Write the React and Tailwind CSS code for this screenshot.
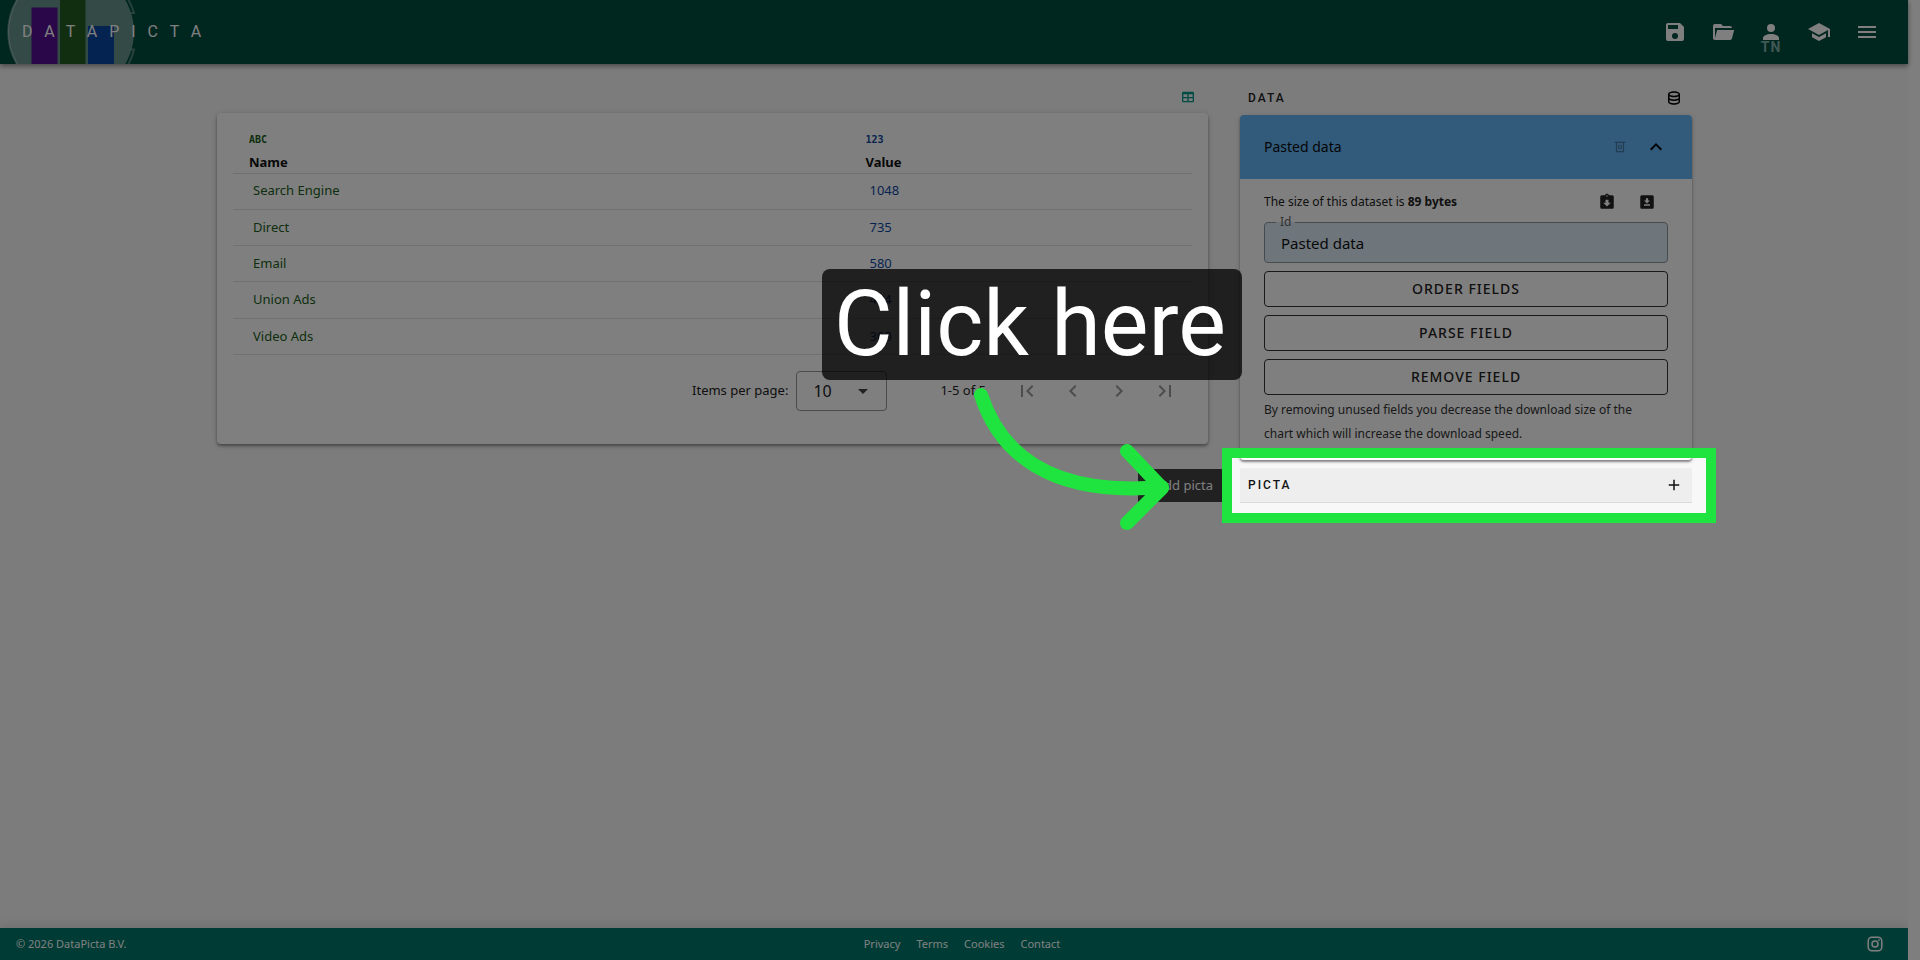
import { useState } from "react";

const icons = {
  save: "M15,9H5V5H15M12,19A3,3 0 0,1 9,16A3,3 0 0,1 12,13A3,3 0 0,1 15,16A3,3 0 0,1 12,19M17,3H5C3.89,3 3,3.9 3,5V19A2,2 0 0,0 5,21H19A2,2 0 0,0 21,19V7L17,3Z",
  folder:
    "M19,20H4C2.89,20 2,19.1 2,18V6C2,4.89 2.89,4 4,4H10L12,6H19A2,2 0 0,1 21,8H21L4,8V18L6.14,10H23.21L20.93,18.5C20.7,19.37 19.92,20 19,20Z",
  account:
    "M12,4A4,4 0 0,1 16,8A4,4 0 0,1 12,12A4,4 0 0,1 8,8A4,4 0 0,1 12,4M12,14C16.42,14 20,15.79 20,18V20H4V18C4,15.79 7.58,14 12,14Z",
  school: "M12,3L1,9L12,15L21,10.09V17H23V9M5,13.18V17.18L12,21L19,17.18V13.18L12,17L5,13.18Z",
  menu: "M3,6H21V8H3V6M3,11H21V13H3V11M3,16H21V18H3V16Z",
  table:
    "M5,4H19A2,2 0 0,1 21,6V18A2,2 0 0,1 19,20H5A2,2 0 0,1 3,18V6A2,2 0 0,1 5,4M5,8V12H11V8H5M13,8V12H19V8H13M5,14V18H11V14H5M13,14V18H19V14H13Z",
  database:
    "M12 3C7.58 3 4 4.79 4 7V17C4 19.21 7.59 21 12 21S20 19.21 20 17V7C20 4.79 16.42 3 12 3M18 17C18 17.5 15.87 19 12 19S6 17.5 6 17V14.77C7.61 15.55 9.72 16 12 16S16.39 15.55 18 14.77V17M18 12.45C16.7 13.4 14.42 14 12 14C9.58 14 7.3 13.4 6 12.45V9.64C7.47 10.47 9.61 11 12 11C14.39 11 16.53 10.47 18 9.64V12.45M12 9C8.13 9 6 7.5 6 7S8.13 5 12 5C15.87 5 18 6.5 18 7S15.87 9 12 9Z",
  trash: "M3,3H21V5H19V21H5V5H3V3M7,5V19H17V5H7M9,8H11V16H9V8M13,8H15V16H13V8Z",
  chevronUp: "M7.41,15.41L12,10.83L16.59,15.41L18,14L12,8L6,14L7.41,15.41Z",
  clipboard:
    "M12,18L7,13H10V9H14V13H17M12,3A1,1 0 0,1 13,4A1,1 0 0,1 12,5A1,1 0 0,1 11,4A1,1 0 0,1 12,3M19,3H14.82C14.4,1.84 13.3,1 12,1C10.7,1 9.6,1.84 9.18,3H5A2,2 0 0,0 3,5V19A2,2 0 0,0 5,21H19A2,2 0 0,0 21,19V5A2,2 0 0,0 19,3Z",
  download:
    "M5,3H19A2,2 0 0,1 21,5V19A2,2 0 0,1 19,21H5A2,2 0 0,1 3,19V5A2,2 0 0,1 5,3M8,17H16V15H8V17M16,10H13.5V7H10.5V10H8L12,14L16,10Z",
  plus: "M19,13H13V19H11V13H5V11H11V5H13V11H19V13Z",
  pageFirst: "M18.41,16.59L13.82,12L18.41,7.41L17,6L11,12L17,18L18.41,16.59M6,6H8V18H6V6Z",
  pagePrev: "M15.41,16.58L10.83,12L15.41,7.41L14,6L8,12L14,18L15.41,16.58Z",
  pageNext: "M8.59,16.58L13.17,12L8.59,7.41L10,6L16,12L10,18L8.59,16.58Z",
  pageLast: "M5.59,7.41L10.18,12L5.59,16.59L7,18L13,12L7,6L5.59,7.41M16,6H18V18H16V6Z",
  caret: "M7,10L12,15L17,10H7Z",
  instagram:
    "M7.8,2H16.2C19.4,2 22,4.6 22,7.8V16.2A5.8,5.8 0 0,1 16.2,22H7.8C4.6,22 2,19.4 2,16.2V7.8A5.8,5.8 0 0,1 7.8,2M7.6,4A3.6,3.6 0 0,0 4,7.6V16.4C4,18.39 5.61,20 7.6,20H16.4A3.6,3.6 0 0,0 20,16.4V7.6C20,5.61 18.39,4 16.4,4H7.6M17.25,5.5A1.25,1.25 0 0,1 18.5,6.75A1.25,1.25 0 0,1 17.25,8A1.25,1.25 0 0,1 16,6.75A1.25,1.25 0 0,1 17.25,5.5M12,7A5,5 0 0,1 17,12A5,5 0 0,1 12,17A5,5 0 0,1 7,12A5,5 0 0,1 12,7M12,9A3,3 0 0,0 9,12A3,3 0 0,0 12,15A3,3 0 0,0 15,12A3,3 0 0,0 12,9Z",
};

const rows = [
  { name: "Search Engine", value: 1048 },
  { name: "Direct", value: 735 },
  { name: "Email", value: 580 },
  { name: "Union Ads", value: 484 },
  { name: "Video Ads", value: 300 },
];

const Icon = ({ name, className = "w-6 h-6" }) => (
  <svg className={className} viewBox="0 0 24 24" fill="currentColor" aria-hidden="true">
    <path d={icons[name]} />
  </svg>
);

const IconButton = ({ name, label, className = "w-12 h-12", iconClass }) => (
  <button aria-label={label} className={`${className} shrink-0 flex items-center justify-center`}>
    <Icon name={name} className={iconClass} />
  </button>
);

function Header() {
  return (
    <header className="relative z-10 h-16 bg-[#004d40] text-white flex items-center justify-between pr-[17px] shadow-[0_2px_5px_rgba(0,0,0,0.45)]">
      <div className="relative h-16 flex items-center">
        <svg className="absolute left-0 top-0" width="140" height="64" viewBox="0 0 140 64" aria-hidden="true">
          <circle cx="71" cy="32" r="63" fill="#ffffff" fillOpacity="0.4" />
          <rect x="31.5" y="7.5" width="26" height="57" fill="#520f92" />
          <rect x="60" y="0" width="25.5" height="64" fill="#225c22" />
          <rect x="88" y="26" width="26" height="38" fill="#0a47a0" />
          <path d="M17.5 65A63 63 0 0 1 17.5 -1M128 -1Q132 6 134 13H131M131 49.5H134Q132 58 128 65" fill="none" stroke="#ffffff" strokeOpacity="0.3" strokeWidth="2" />
        </svg>
        <a href="#home" className="relative pl-[22px] font-['Roboto',sans-serif] text-base tracking-[12px]">
          DATAPICTA
        </a>
      </div>
      <nav className="flex items-center">
        <IconButton name="save" label="Save" />
        <IconButton name="folder" label="Open" />
        <div className="relative">
          <IconButton name="account" label="Account" />
          <span className="absolute inset-x-0 top-[31px] text-center font-['Roboto',sans-serif] text-sm leading-4 font-bold tracking-[1px] text-[#80b0a8]">
            TN
          </span>
        </div>
        <IconButton name="school" label="Tutorials" />
        <IconButton name="menu" label="Menu" />
      </nav>
    </header>
  );
}

function DataTable() {
  return (
    <section className="flex-1 min-w-0">
      <div className="h-[49px] pt-4 flex items-center justify-end pr-3 text-[#009688]">
        <IconButton name="table" label="Show table" className="w-4 h-8" iconClass="w-4 h-4" />
      </div>
      <div className="bg-white rounded px-4 pb-[33px] shadow-[0_2px_3px_rgba(0,0,0,0.35),0_1px_6px_rgba(0,0,0,0.15)]">
        <table className="w-full h-[242px] border-collapse table-fixed text-left text-[13px]">
          <thead>
            <tr className="h-[60px] border-b border-[#dedede]">
              <th className="w-9/14 px-4 pb-px align-bottom text-[#111]">
                <span className="block font-['DejaVu_Sans_Mono',monospace] text-[10px] leading-4 mb-1 text-[#1b5e20]">ABC</span>
                <span className="block leading-5">Name</span>
              </th>
              <th className="px-4 pb-px align-bottom text-[#111]">
                <span className="block font-['DejaVu_Sans_Mono',monospace] text-[10px] leading-4 mb-1 text-[#0d47a1]">123</span>
                <span className="block leading-5">Value</span>
              </th>
            </tr>
          </thead>
          <tbody>
            {rows.map((row) => (
              <tr key={row.name} className="border-b border-[#e2e2e2]">
                <td className="px-5 text-[#1b5e20]">{row.name}</td>
                <td className="px-5 text-[#0d47a1]">{row.value}</td>
              </tr>
            ))}
          </tbody>
        </table>
        <div className="mt-4 h-10 flex items-center justify-end text-[13px] text-[#222]">
          <label htmlFor="per-page" className="mr-2">Items per page:</label>
          <div className="relative">
            <select
              id="per-page"
              defaultValue="10"
              className="appearance-none block w-[91px] h-10 pl-4 rounded border border-[#999] bg-transparent text-base"
            >
              <option>10</option>
              <option>25</option>
              <option>50</option>
            </select>
            <Icon name="caret" className="absolute right-3 top-2 w-6 h-6 pointer-events-none text-[#444]" />
          </div>
          <span className="ml-[53px] mr-[18px]">1-5 of 5</span>
          <div className="flex text-[#999] pr-1">
            <IconButton name="pageFirst" label="First page" className="w-[46px] h-10" />
            <IconButton name="pagePrev" label="Previous page" className="w-[46px] h-10" />
            <IconButton name="pageNext" label="Next page" className="w-[46px] h-10" />
            <IconButton name="pageLast" label="Last page" className="w-[46px] h-10" />
          </div>
        </div>
      </div>
    </section>
  );
}

function DataPanel() {
  const [id, setId] = useState("Pasted data");

  return (
    <>
      <div className="h-[51px] pt-4 flex items-center justify-between pl-2 pr-[9px]">
        <h2 className="font-['Roboto',sans-serif] text-xs font-medium tracking-[2px] text-[#222]">DATA</h2>
        <IconButton name="database" label="Data sources" className="w-[18px] h-8" iconClass="w-[18px] h-[18px]" />
      </div>
      <div className="bg-white rounded shadow-[0_2px_2px_rgba(0,0,0,0.4),0_1px_5px_rgba(0,0,0,0.15)]">
        <div className="h-16 pl-6 pr-[26px] rounded-t bg-[#64b5f6] flex items-center text-[#0a0a0a]">
          <h3 className="flex-1 text-sm">Pasted data</h3>
          <IconButton name="trash" label="Delete" className="w-9 h-9 mr-2 text-[#4479a5]" iconClass="w-[14px] h-[14px]" />
          <IconButton name="chevronUp" label="Collapse" className="w-5 h-9" iconClass="w-6 h-6 shrink-0" />
        </div>
        <div className="px-6 pt-2 pb-[14px]">
          <div className="h-[30px] mb-[5px] pr-3 flex items-center text-[#222]">
            <p className="flex-1 text-xs">
              The size of this dataset is <b>89 bytes</b>
            </p>
            <IconButton name="clipboard" label="Copy data" className="w-10 h-7" iconClass="w-[18px] h-[18px]" />
            <IconButton name="download" label="Download data" className="w-[18px] ml-[11px] h-7" iconClass="w-[18px] h-[18px]" />
          </div>
          <div className="relative">
            <label htmlFor="dataset-id" className="absolute left-3 -top-2 px-1 text-xs leading-4 text-[#666] bg-linear-to-b from-white from-50% to-[#dcebf7] to-50%">
              Id
            </label>
            <input
              id="dataset-id"
              value={id}
              onChange={(e) => setId(e.target.value)}
              className="block w-full h-[41px] px-4 rounded border border-[#8d969d] bg-[#dcebf7] text-[15px] text-[#111]"
            />
          </div>
          <div className="mt-2 flex flex-col gap-2">
            {["ORDER FIELDS", "PARSE FIELD", "REMOVE FIELD"].map((action) => (
              <button key={action} className="h-9 rounded border border-[#333] text-sm font-medium tracking-[1px] text-[#222]">
                {action}
              </button>
            ))}
          </div>
          <p className="mt-[3px] pr-5 text-xs leading-6 text-[#333]">
            By removing unused fields you decrease the download size of the chart which will increase the download speed.
          </p>
        </div>
      </div>
    </>
  );
}

// Guided tour step: the spotlight dims everything outside of its frame
function TourStep() {
  return (
    <>
      <div className="absolute z-40 -left-[18px] -right-6 -top-5 -bottom-5 border-10 border-[#1fe43f] shadow-[0_0_0_3000px_rgba(0,0,0,0.5)] pointer-events-none" />
      <div className="absolute z-50 right-[450px] bottom-[123px] h-[111px] pl-3 pr-4 rounded-lg bg-black/75 text-white font-['Roboto',sans-serif] text-[90px] leading-[111px] whitespace-nowrap">
        Click here
      </div>
      <svg className="absolute z-50 right-[512px] -top-[90px]" width="210" height="160" viewBox="970 378 210 160" fill="none" stroke="#1fe43f" strokeWidth="14" strokeLinecap="round" strokeLinejoin="round" aria-hidden="true">
        <path d="M981 395C1000 453 1050 497 1162 487" />
        <path d="M1127 451L1162 488L1127 523" />
      </svg>
    </>
  );
}

function PictaPanel() {
  return (
    <div className="relative mt-2">
      <div className="h-[35px] pl-2 pr-[9px] flex items-center justify-between bg-[#eeeeee] border-b border-[#dcdcdc] text-[#111]">
        <h2 className="font-['Roboto',sans-serif] text-xs font-medium tracking-[2px]">PICTA</h2>
        <IconButton name="plus" label="Add picta" className="w-[18px] h-8" iconClass="w-[18px] h-[18px]" />
      </div>
      <div role="tooltip" className="absolute right-full top-px mr-2 h-[33px] w-[94px] pr-[19px] bg-[#424242] text-right text-[13px] leading-8 text-white whitespace-nowrap">
        Add picta
      </div>
      <TourStep />
    </div>
  );
}

function Footer() {
  return (
    <footer className="h-8 px-4 grid grid-cols-3 items-center bg-[#00796b] text-[11px] text-white shadow-[0_-2px_12px_rgba(0,0,0,0.12)]">
      <span>© 2026 DataPicta B.V.</span>
      <nav className="flex justify-center">
        <a href="#privacy" className="ml-4">Privacy</a>
        <a href="#terms" className="ml-4">Terms</a>
        <a href="#cookies" className="ml-4">Cookies</a>
        <a href="#contact" className="ml-4">Contact</a>
      </nav>
      <a href="#instagram" aria-label="Instagram" className="justify-self-end mr-2">
        <Icon name="instagram" className="w-[18px] h-[18px]" />
      </a>
    </footer>
  );
}

export default function App() {
  return (
    <div className="min-h-screen flex overflow-hidden bg-[#f8f8f8] font-['Noto_Sans',sans-serif]">
      <div className="flex-1 min-w-0 flex flex-col">
        <Header />
        <main className="flex-1 w-full max-w-[1476px] pl-px mx-auto flex items-start gap-8">
          <DataTable />
          <aside className="w-[452px] shrink-0">
            <DataPanel />
            <PictaPanel />
          </aside>
        </main>
        <Footer />
      </div>
      <div className="w-3 shrink-0 bg-[#fdfdfd]" />
    </div>
  );
}
